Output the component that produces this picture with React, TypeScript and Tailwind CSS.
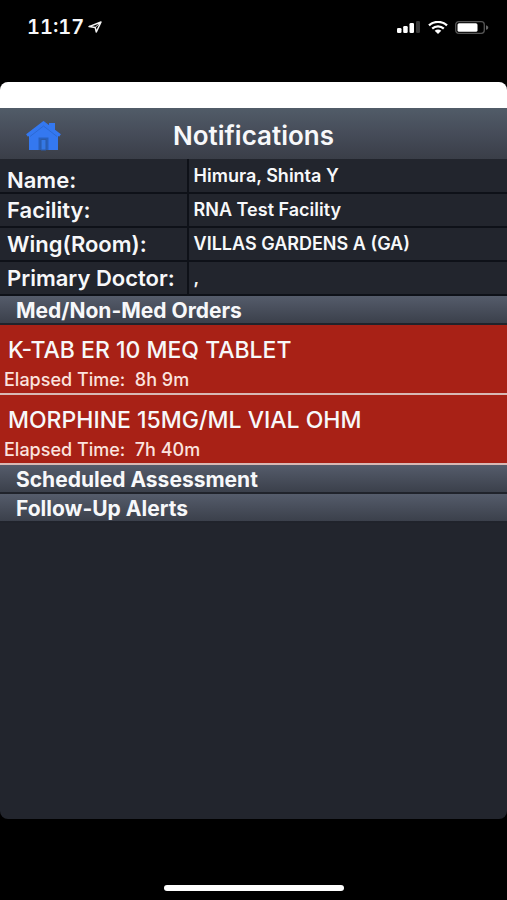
const details = [
  { label: 'Name:', value: 'Himura, Shinta Y', labelPad: 'pt-2' },
  { label: 'Facility:', value: 'RNA Test Facility', labelPad: 'pt-0' },
  { label: 'Wing(Room):', value: 'VILLAS GARDENS A (GA)', labelPad: 'pt-0' },
  { label: 'Primary Doctor:', value: ',', labelPad: 'pt-0' },
];

const orders = [
  { name: 'K-TAB ER 10 MEQ TABLET', elapsed: '8h 9m' },
  { name: 'MORPHINE 15MG/ML VIAL OHM', elapsed: '7h 40m' },
];

function StatusBar() {
  return (
    <div className="flex h-[82px] items-start justify-between pt-4 pr-[18px] pl-[27px]">
      <div className="flex items-center gap-1">
        <span className="text-xl leading-[22px] font-semibold tabular-nums">11:17</span>
        <svg className="h-3 w-3.5" viewBox="0 0 14 12" fill="none" stroke="#f4f4f4" strokeWidth="1.5" strokeLinejoin="round" aria-label="Location">
          <path d="M1 5.6 13 1 8.3 11 7.2 6.4Z" />
          <path d="M7.2 6.4 13 1" strokeWidth="1" />
        </svg>
      </div>
      <div className="flex h-[22px] items-center gap-[7px]">
        <svg className="h-3 w-6" viewBox="0 0 24 12" fill="#fff" aria-label="Signal">
          <rect x="0" y="7" width="4.5" height="5" rx="1.3" />
          <rect x="6.2" y="5" width="4.5" height="7" rx="1.3" />
          <rect x="12.5" y="2" width="4.5" height="10" rx="1.3" />
          <rect x="19" y="0" width="4" height="12" rx="1.3" fill="#383838" />
        </svg>
        <svg className="h-[13px] w-5" viewBox="0 0 20 13" fill="none" stroke="#fff" aria-label="Wi-Fi">
          <path d="M1 4.4C6-.2 14-.2 19 4.4" strokeWidth="2.3" />
          <path d="M4.2 7.6c3.2-3 8.4-3 11.6 0" strokeWidth="2.2" />
          <path d="M6.7 9.8c1.8-1.7 4.8-1.7 6.6 0L10 13Z" fill="#fff" stroke="none" />
        </svg>
        <svg className="h-[13px] w-[34px]" viewBox="0 0 34 13" aria-label="Battery">
          <rect x=".7" y=".7" width="28.6" height="11.6" rx="3" fill="none" stroke="#555" strokeWidth="1.3" />
          <rect x="2.5" y="2.2" width="20" height="8.6" rx="1.6" fill="#fff" />
          <path d="M31 4.2c3 .8 3 3.8 0 4.6Z" fill="#666" />
        </svg>
      </div>
    </div>
  );
}

function HomeIcon() {
  return (
    <svg className="h-[30px] w-[35px]" viewBox="0 0 35 30" aria-hidden="true">
      <path d="M3 14 17.5 3 32 14V29H3Z" fill="#3478f0" />
      <path d="M23 2h6v10l-6-5Z" fill="#3478f0" />
      <path d="M1 14.5 17.5 1.8 34 14.5" fill="none" stroke="#3478f0" strokeWidth="3" />
      <path d="M4 15.5 17.5 5 31 15.5" fill="none" stroke="#2c69d4" strokeWidth="1" />
      <path d="M12.5 29V16.5h10V29" fill="#2860bd" />
      <path d="M15 29V18.5h5V29Z" fill="#3478e5" stroke="#2b5ba8" />
    </svg>
  );
}

function SectionHeader({ title }: { title: string }) {
  return (
    <h2 className="border-b-2 border-[#20232b] bg-linear-to-b from-[#555c6b] to-[#3b404b] pt-0.5 pl-4 text-[21px] leading-[25px] font-bold">
      {title}
    </h2>
  );
}

export default function App() {
  return (
    <div className="flex min-h-screen flex-col bg-black font-['Inter','Liberation_Sans',sans-serif] text-[#f7f8fa]">
      <StatusBar />
      <main className="flex flex-1 flex-col overflow-hidden rounded-lg bg-[#22252d]">
        <div className="h-[26px] bg-white" />
        <header className="grid h-[51px] grid-cols-[1fr_auto_1fr] items-center bg-linear-to-b from-[#515c68] via-[#464c59] to-[#3a3e48]">
          <button type="button" aria-label="Home" className="ml-[26px] w-fit pt-1">
            <HomeIcon />
          </button>
          <h1 className="pt-1 text-[26px] leading-7 font-semibold">Notifications</h1>
        </header>
        <table className="w-full table-fixed border-collapse text-left">
          <tbody>
            {details.map((item) => (
              <tr key={item.label} className="h-[34px] border-b-2 border-[#0e1118]">
                <th scope="row" className={`w-[37%] border-r-2 border-[#0e1118] pb-0 pl-[7px] text-[22px] leading-6 font-semibold whitespace-nowrap ${item.labelPad}`}>
                  {item.label}
                </th>
                <td className="py-0 pl-[5px] text-lg leading-6 font-semibold">{item.value}</td>
              </tr>
            ))}
          </tbody>
        </table>
        <SectionHeader title="Med/Non-Med Orders" />
        <ul>
          {orders.map((order) => (
            <li key={order.name} className="border-b-2 border-[#d8b9b5] bg-[#a82116] pt-[11px] pb-[3px]">
              <p className="pl-2 text-[23px] leading-7 font-medium">{order.name}</p>
              <p className="pt-1.5 pl-1 text-lg leading-5 font-medium whitespace-pre text-[#fbe3df]">{`Elapsed Time:  ${order.elapsed}`}</p>
            </li>
          ))}
        </ul>
        <SectionHeader title="Scheduled Assessment" />
        <SectionHeader title="Follow-Up Alerts" />
      </main>
      <div className="flex h-[81px] items-end justify-center pb-[9px]">
        <div className="h-1.5 w-[180px] rounded-full bg-white" />
      </div>
    </div>
  );
}
